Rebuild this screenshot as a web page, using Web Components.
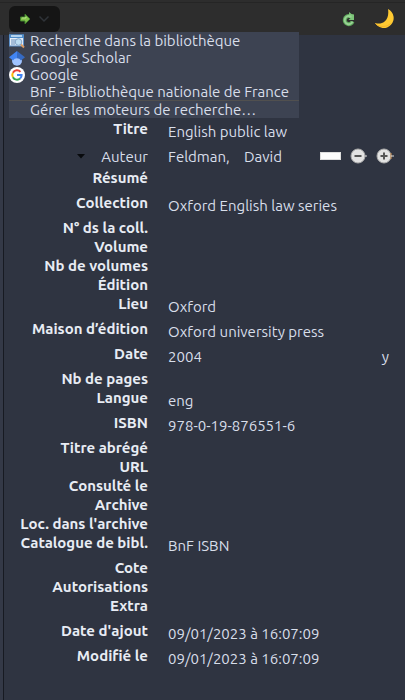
<!DOCTYPE html>
<html lang="fr">
<head>
<meta charset="utf-8">
<title>Notice</title>
<style>
html, body { margin: 0; min-height: 100%; background: #2f3441; }
body { font: 15px/19px "Ubuntu", "Noto Sans", sans-serif; color: #d8deea; }
</style>
</head>
<body>
<item-pane></item-pane>
<script>
const define = (name, html) => customElements.define(name, class extends HTMLElement {
  constructor() {
    super();
    this.attachShadow({ mode: 'open' }).innerHTML = html;
  }
});

define('locate-button', `
<style>
:host { display: block; }
button { display: flex; align-items: center; justify-content: center; gap: 7px; width: 51px; height: 26px; padding: 0; border: 0; border-radius: 6px; background: #151515; }
</style>
<button aria-label="Localiser" aria-expanded="true">
<svg width="12" height="12" viewBox="0 0 12 12"><path d="M1.500 4H6V1.200L11 6l-5 4.800V8H1.500z" fill="#84c34c" stroke="#3f812c"/><path d="M3 5h4V3.800" fill="none" stroke="#b7e58a"/></svg>
<svg width="12" height="8" viewBox="0 0 12 8"><path d="M1.500 1.500L6 6l4.500-4.500" fill="none" stroke="#2f3338" stroke-width="1.500"/></svg>
</button>`);

define('locate-menu', `
<style>
:host { display: block; width: 290px; height: 86px; background: #3d4352; }
::slotted(hr) { border: 0; height: 1px; margin: 0; background: #51504f; }
</style><slot></slot>`);

define('locate-item', `
<style>
:host { display: block; }
button { display: flex; align-items: center; gap: 5px; width: 100%; height: 17px; padding: 0; border: 0; background: none; color: inherit; font: inherit; line-height: 17px; text-align: left; white-space: nowrap; }
.icon { width: 16px; height: 16px; flex: none; display: flex; }
</style>
<button role="menuitem"><span class="icon"><slot name="icon"></slot></span><span><slot></slot></span></button>`);

define('top-bar', `
<style>
:host { display: block; background: #2d2d2d; border-top: 2px solid #2d2d2d; box-shadow: inset 0 1px #252525; height: 33px; }
.bar { display: flex; align-items: center; padding: 4px 9px 0; }
.space { flex: 1; }
.tool { padding: 0; border: 0; background: none; display: flex; }
.tool + .tool { margin-left: 18px; }
.anchor { position: relative; }
locate-menu { position: absolute; left: 0; top: 26px; z-index: 2; }
</style>
<div class="bar">
<div class="anchor">
<locate-button></locate-button>
<locate-menu role="menu">
<locate-item><svg slot="icon" width="16" height="16" viewBox="0 0 16 16"><rect x=".5" y="2" width="14" height="11" fill="#e5edf7" stroke="#5e91ca"/><path d="M0 1.500h15V5H0z" fill="#4f8dcb"/><path d="M2 3h11" stroke="#d5eafa" stroke-width="1.500"/><path d="M2 7h5M2 9h4M2 11h4" stroke="#668dbb"/><circle cx="9.500" cy="9" r="3.300" fill="#bddcf2" stroke="#84a5c8"/><path d="M12 11.500l3 3" stroke="#d99b63" stroke-width="2"/></svg>Recherche dans la bibliothèque</locate-item>
<locate-item><svg slot="icon" width="16" height="16" viewBox="0 0 16 16"><circle cx="8" cy="10.700" r="5" fill="#a0c3ff"/><path d="M8 1L0 7.300l4 3.200a4.700 4.700 0 014-2.300z" fill="#4285f4"/><path d="M8 1l8 6.300-4 3.200a4.700 4.700 0 00-4-2.300z" fill="#356ac3"/></svg>Google Scholar</locate-item>
<locate-item><svg slot="icon" width="16" height="16" viewBox="0 0 16 16"><circle cx="8" cy="8" r="8" fill="#fff"/><g fill="none" stroke-width="2"><path d="M11.500 4.800A4.700 4.700 0 003.900 5.700" stroke="#ea4335"/><path d="M3.900 5.700a4.700 4.700 0 000 4.600" stroke="#fbbc05"/><path d="M3.900 10.300a4.700 4.700 0 007.200 1.200" stroke="#34a853"/><path d="M11.100 11.500A4.500 4.500 0 0012.600 8H8" stroke="#4285f4"/></g></svg>Google</locate-item>
<locate-item>BnF - Bibliothèque nationale de France</locate-item>
<hr>
<locate-item>Gérer les moteurs de recherche…</locate-item>
</locate-menu>
</div>
<span class="space"></span>
<button class="tool" aria-label="Synchroniser"><svg width="14" height="16" viewBox="0 0 14 16"><path d="M10.500 10.500A4 4 0 117.500 5.200" fill="none" stroke="#5fa75c" stroke-width="4"/><path d="M7 1l2.500 2L12 3.500V9H6.500l2-2L7 7z" fill="#7cc478"/><path d="M10.500 10.500A4 4 0 117.500 5.200l2 .5" fill="none" stroke="#98d294" stroke-width="2"/></svg></button>
<button class="tool" aria-label="Thème sombre"><svg width="22" height="22" viewBox="0 0 22 22"><path d="M14 1a10 10 0 11-13 14c6 2 15-1 13-14z" fill="#ffca32"/><path d="M1.500 15.500c4 4 11 4 15 0" fill="none" stroke="#f5b72b"/></svg></button>
</div>`);

customElements.define('field-row', class extends HTMLElement {
  constructor() {
    super();
    this.attachShadow({ mode: 'open' }).innerHTML = `
<style>
:host { display: grid; grid-template-columns: 148px 1fr; column-gap: 20px; min-height: 19px; }
:host([filled]) { min-height: 25px; }
dt { margin: 0; font-weight: 700; text-align: right; color: #e8ecf4; white-space: nowrap; }
dd { margin: 0; line-height: 25px; display: flex; justify-content: space-between; padding-right: 16px; }
</style>
<dt></dt><dd><slot></slot></dd>`;
    this.shadowRoot.querySelector('dt').textContent = this.getAttribute('label');
    if (!this.hasChildNodes()) this.shadowRoot.querySelector('dd').remove();
  }
});

define('creator-row', `
<style>
:host { display: grid; grid-template-columns: 148px 1fr; column-gap: 20px; height: 24px; align-items: center; }
button { padding: 0; border: 0; background: none; color: inherit; font: inherit; display: flex; align-items: center; }
.role { justify-self: end; gap: 16px; }
.names { display: flex; align-items: center; padding-right: 11px; }
.last { width: 60px; white-space: nowrap; }
.first { margin-left: 16px; flex: 1; }
.mode { width: 21px; height: 8px; background: #fcfcfc; border: 1px solid #ddd; box-sizing: border-box; }
.round { margin-left: 9px; }
</style>
<button class="role"><svg width="8" height="5" viewBox="0 0 8 5"><path d="M0 0h8L4 4.500z" fill="#080a0d"/></svg>Auteur</button>
<div class="names"><span class="last">Feldman,</span><span class="first">David</span>
<button class="mode" aria-label="Champ unique"></button>
<button class="round" aria-label="Supprimer"><svg width="17" height="16" viewBox="0 0 17 16"><circle cx="8" cy="8" r="7" fill="#e2e2e2" stroke="#aaa"/><path d="M4.500 8h7" stroke="#555" stroke-width="2"/><path d="M15 8h2" stroke="#ddd"/></svg></button>
<button class="round" aria-label="Ajouter"><svg width="18" height="16" viewBox="0 0 18 16"><circle cx="8" cy="8" r="7" fill="#e2e2e2" stroke="#aaa"/><path d="M4.500 8h7M8 4.500v7" stroke="#555" stroke-width="2"/><path d="M15 5v6" stroke="#c98c4c"/><path d="M15 8h3" stroke="#ddd"/></svg></button>
</div>`);

define('item-pane', `
<style>
:host { display: block; }
dl { margin: 0; padding: 84px 0 30px; border-left: 3px solid #343947; box-shadow: inset 1px 0 #171a22; }
dl > * { margin-left: -3px; }
</style>
<top-bar></top-bar>
<dl>
<field-row label="Titre" filled>English public law</field-row>
<creator-row></creator-row>
<field-row label="Résumé" filled></field-row>
<field-row label="Collection" filled>Oxford English law series</field-row>
<field-row label="N° ds la coll."></field-row>
<field-row label="Volume"></field-row>
<field-row label="Nb de volumes"></field-row>
<field-row label="Édition"></field-row>
<field-row label="Lieu" filled>Oxford</field-row>
<field-row label="Maison d’édition" filled>Oxford university press</field-row>
<field-row label="Date" filled><span>2004</span><span>y</span></field-row>
<field-row label="Nb de pages"></field-row>
<field-row label="Langue" filled>eng</field-row>
<field-row label="ISBN" filled>978-0-19-876551-6</field-row>
<field-row label="Titre abrégé"></field-row>
<field-row label="URL"></field-row>
<field-row label="Consulté le"></field-row>
<field-row label="Archive"></field-row>
<field-row label="Loc. dans l'archive"></field-row>
<field-row label="Catalogue de bibl." filled>BnF ISBN</field-row>
<field-row label="Cote"></field-row>
<field-row label="Autorisations"></field-row>
<field-row label="Extra" filled></field-row>
<field-row label="Date d'ajout" filled>09/01/2023 à 16:07:09</field-row>
<field-row label="Modifié le" filled>09/01/2023 à 16:07:09</field-row>
</dl>`);
</script>
</body>
</html>
